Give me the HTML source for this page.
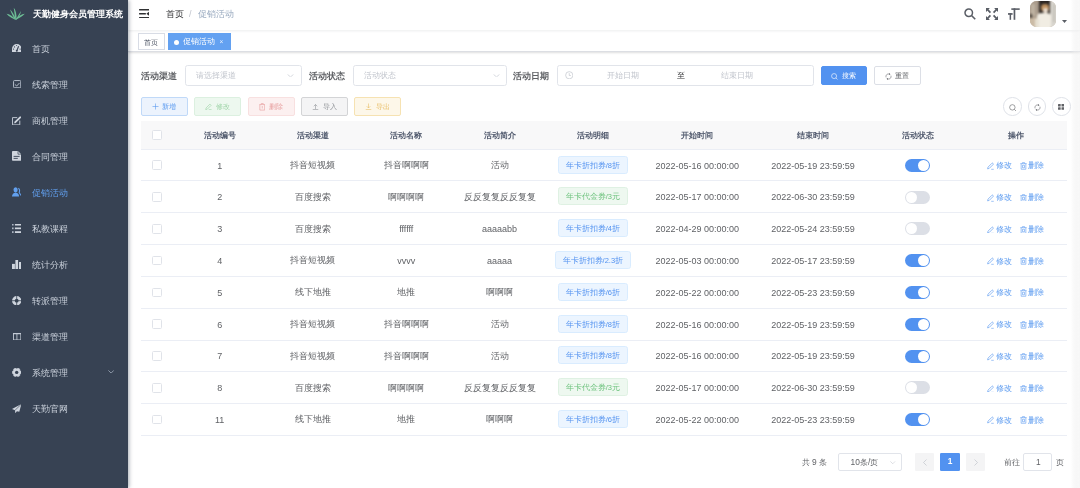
<!DOCTYPE html>
<html><head><meta charset="utf-8">
<style>
*{box-sizing:border-box;margin:0;padding:0}
html,body{width:1080px;height:488px;overflow:hidden;background:#fff;font-family:"Liberation Sans",sans-serif;position:relative}
.abs{position:absolute}
#side{position:absolute;left:0;top:0;width:128px;height:488px;background:#374253;box-shadow:1.3px 0 4px rgba(0,21,41,.35);z-index:5}
.title{position:absolute;left:33px;top:7px;font-size:9px;line-height:14px;font-weight:700;color:#fff;white-space:nowrap}
.mi{position:absolute;left:0;width:128px;height:36px;font-size:9px;line-height:36px;white-space:nowrap}
.mic{position:absolute;left:12px;top:0;width:10px;height:36px;display:flex;align-items:center;justify-content:center}
.mt{position:absolute;left:32px;top:0}
#nav{position:absolute;left:128px;top:0;width:952px;height:30px;background:#fff;box-shadow:0 0.6px 2.6px rgba(0,21,41,.08);z-index:3}
.bc{position:absolute;top:8px;font-size:9px;line-height:12px;white-space:nowrap}
#tags{position:absolute;left:128px;top:30px;width:952px;height:22px;background:#fff;border-bottom:0.65px solid #dcdee3;box-shadow:0 0.6px 2px rgba(0,0,0,.12),0 0 2px rgba(0,0,0,.04);z-index:2}
.tg{position:absolute;top:3.1px;height:16.6px;font-size:7.9px;line-height:16.6px;white-space:nowrap;border:0.65px solid #d8dce5;color:#495060;background:#fff}
.lbl{position:absolute;top:68.7px;font-size:9px;line-height:14px;font-weight:700;color:#606266;white-space:nowrap}
.inp{position:absolute;top:65.3px;height:20.3px;border:1px solid #e1e4ea;border-radius:2.6px;background:#fff}
.ph{position:absolute;font-size:8.4px;line-height:12px;color:#c0c4cc;white-space:nowrap}
.btn{position:absolute;height:18.5px;border-radius:2px;font-size:7.4px;line-height:17.2px;white-space:nowrap;border:0.65px solid}
.thead{position:absolute;background:#f8f8f9;border-bottom:1px solid #ebeef5}
.rline{position:absolute;height:1px;background:#ebeef5}
.cell{position:absolute;display:flex;align-items:center;justify-content:center;font-size:9px;color:#606266;white-space:nowrap;padding-top:1.2px}
.chk{position:absolute;width:9.6px;height:9.6px;border:1px solid #e0e3e9;border-radius:1.5px;background:#fff}
.tag{display:inline-block;position:relative;top:-0.9px;height:18px;line-height:17px;padding:0 6.8px;border-radius:2.6px;border:0.65px solid;font-size:7.5px}
.tagb{background:#ecf5ff;border-color:#d9ecff;color:#5292f0}
.tagg{background:#eef8f0;border-color:#dff1e3;color:#6cc27c}
.sw{display:inline-block;position:relative;width:25.7px;height:12.9px;border-radius:6.5px;background:#dcdfe6;top:-0.3px}
.sw i{position:absolute;left:1px;top:1px;width:10.9px;height:10.9px;border-radius:50%;background:#fff}
.sw.on{background:#5292f0}
.sw.on i{left:13.8px}
.op{color:#5c9bf0;font-size:7.5px;display:inline-flex;align-items:center;padding-top:1.2px}
.op svg{margin-right:1.2px;position:relative;top:-0.3px}
.circ{position:absolute;top:97.4px;width:18.4px;height:18.4px;border-radius:50%;border:0.65px solid #dfe2e8;background:#fff}
.pg{position:absolute;top:453.2px;height:17.6px;font-size:8.4px;line-height:19.2px;white-space:nowrap;color:#606266}
</style></head><body><div id="root" style="position:absolute;left:0;top:0;width:1080px;height:488px;will-change:transform">
<div id="side">
  <svg style="position:absolute;left:5.5px;top:7px" width="19" height="13" viewBox="0 0 38 26">
    <path d="M19 25C17.5 18 16.5 8 15.5 1.5c3.5 4 6 12 5.5 23.5z" fill="#6dbd95"/>
    <path d="M18 25C14 19 10.5 12 8 5c4 3.5 8 10 11.5 19z" fill="#6dbd95"/>
    <path d="M20 25c3.5-6 6.5-12 10-17-1 7-4.5 13-8.5 17z" fill="#6dbd95"/>
    <path d="M18.5 25.5C12 22.5 6 19 1 13.5c6 0.5 12 5 18.5 11z" fill="#6dbd95"/>
    <path d="M19.5 25.5c6.5-3 12.5-6.5 18-12-6.5 0.5-12.5 5-18.5 11z" fill="#6dbd95"/>
  </svg>
  <div class="title">天勤健身会员管理系统</div>
  <div class="mi" style="top:31.25px;color:#c9d0da"><span class="mt">首页</span></div>
<div class="mi" style="top:67.25px;color:#c9d0da"><span class="mt">线索管理</span></div>
<div class="mi" style="top:103.25px;color:#c9d0da"><span class="mt">商机管理</span></div>
<div class="mi" style="top:139.25px;color:#c9d0da"><span class="mt">合同管理</span></div>
<div class="mi" style="top:175.25px;color:#62a0ef"><span class="mt">促销活动</span></div>
<div class="mi" style="top:211.25px;color:#c9d0da"><span class="mt">私教课程</span></div>
<div class="mi" style="top:247.25px;color:#c9d0da"><span class="mt">统计分析</span></div>
<div class="mi" style="top:283.25px;color:#c9d0da"><span class="mt">转派管理</span></div>
<div class="mi" style="top:319.25px;color:#c9d0da"><span class="mt">渠道管理</span></div>
<div class="mi" style="top:355.25px;color:#c9d0da"><span class="mt">系统管理</span></div>
<div class="mi" style="top:391.25px;color:#c9d0da"><span class="mt">天勤官网</span></div>
<svg style="position:absolute;left:11.9px;top:44.1px" width="9.6" height="8.1" viewBox="0 0 9.6 8.1"><path d="M0 8.1V4.8A4.8 4.8 0 0 1 9.6 4.8V8.1z" fill="#cfd5de"/><path d="M6.6 2.3L4.9 6.6" stroke="#374253" stroke-width="1.1"/><circle cx="4.8" cy="6.7" r="1" fill="#374253"/><circle cx="2.5" cy="2.9" r=".6" fill="#374253"/><circle cx="1.5" cy="5.1" r=".6" fill="#374253"/><circle cx="8.1" cy="5.1" r=".6" fill="#374253"/><circle cx="4.6" cy="1.6" r=".5" fill="#374253"/></svg>
<svg style="position:absolute;left:12.8px;top:79.9px" width="8.3" height="8.3" viewBox="0 0 8.3 8.3"><rect x=".55" y=".55" width="7.2" height="7.2" rx=".9" fill="none" stroke="#b3bcc9" stroke-width="1"/><path d="M1.9 4.5L3.7 6L6.5 3" fill="none" stroke="#b3bcc9" stroke-width="1"/></svg>
<svg style="position:absolute;left:11.9px;top:115.7px" width="9.4" height="9.4" viewBox="0 0 9.4 9.4"><path d="M5.2 1.6H.5V8.9H7.8V4.6" fill="none" stroke="#c3cad5" stroke-width=".95"/><path d="M3.3 6.2L8.2 1.3" stroke="#cfd5de" stroke-width="1.9" stroke-linecap="round"/><path d="M3.2 6.3L2.3 7.3" stroke="#cfd5de" stroke-width="1"/></svg>
<svg style="position:absolute;left:12.0px;top:151.2px" width="9.2" height="9.7" viewBox="0 0 9.2 9.7"><path d="M.8 0H6L9.2 3.2V8.9Q9.2 9.7 8.4 9.7H.8Q0 9.7 0 8.9V.8Q0 0 .8 0z" fill="#cfd5de"/><path d="M6 .2V3.2H9" fill="none" stroke="#374253" stroke-width=".7"/><path d="M1.6 5.4H7.6M1.6 7.4H5.8" stroke="#374253" stroke-width=".9"/></svg>
<svg style="position:absolute;left:11.9px;top:187.3px" width="9.4" height="9.6" viewBox="0 0 9.4 9.6"><ellipse cx="3.6" cy="2.8" rx="2.1" ry="2.6" fill="#62a0ef"/><path d="M0 9.6Q0.2 6.2 3.6 5.5Q7 6.2 7.1 9.6z" fill="#62a0ef"/><path d="M6.4 1.2Q8.3 2.6 7.2 5.4L9 8.6" fill="none" stroke="#62a0ef" stroke-width="1.1"/></svg>
<svg style="position:absolute;left:11.9px;top:223.9px" width="9.2" height="9.0" viewBox="0 0 9.2 9.0"><rect x="0" y="0" width="1.6" height="1.5" fill="#aeb7c4"/><rect x="2.9" y="0" width="6.3" height="1.5" fill="#cfd5de"/><rect x="0" y="3.5" width="1.6" height="1.7" fill="#aeb7c4"/><rect x="2.9" y="3.5" width="6.3" height="1.7" fill="#cfd5de"/><rect x="0" y="7.2" width="1.6" height="1.8" fill="#aeb7c4"/><rect x="2.9" y="7.2" width="6.3" height="1.8" fill="#cfd5de"/></svg>
<svg style="position:absolute;left:11.9px;top:259.7px" width="9.2" height="9.2" viewBox="0 0 9.2 9.2"><rect x="0" y="3.9" width="2.9" height="5.3" fill="#cfd5de"/><rect x="3.4" y="0" width="2.7" height="9.2" fill="#cfd5de"/><rect x="7" y="2" width="2.2" height="7.2" fill="#cfd5de"/></svg>
<svg style="position:absolute;left:11.9px;top:295.5px" width="9.4" height="9.4" viewBox="0 0 9.4 9.4"><circle cx="4.7" cy="4.7" r="3.3" fill="none" stroke="#cfd5de" stroke-width="2.8"/><path d="M4.7 0V9.4M0 4.7H9.4" stroke="#374253" stroke-width=".8"/></svg>
<svg style="position:absolute;left:12.8px;top:332.8px" width="8.3" height="7.4" viewBox="0 0 8.3 7.4"><rect x=".45" y=".6" width="7.4" height="6.35" fill="none" stroke="#c3cad5" stroke-width=".9"/><rect x="0" y="0" width="8.3" height="1.2" fill="#c3cad5"/><path d="M3.9 1V7" stroke="#c3cad5" stroke-width=".85"/></svg>
<svg style="position:absolute;left:11.9px;top:367.9px" width="9.4" height="8.8" viewBox="0 0 9.4 8.8"><path d="M9.20 3.44 L9.20 5.36 L7.90 6.25 L7.78 7.82 L6.12 8.77 L4.70 8.10 L3.28 8.77 L1.62 7.82 L1.50 6.25 L0.20 5.36 L0.20 3.44 L1.50 2.55 L1.62 0.98 L3.28 0.03 L4.70 0.70 L6.12 0.03 L7.78 0.98 L7.90 2.55z" fill="#cfd5de" stroke="#cfd5de" stroke-width=".4" stroke-linejoin="round"/><circle cx="4.7" cy="4.4" r="1.7" fill="#374253"/></svg>
<svg style="position:absolute;left:11.9px;top:403.7px" width="9.4" height="9.2" viewBox="0 0 9.4 9.2"><path d="M9.4 0L0 5L3 6.3L3.3 9.2L4.9 7.3L7.3 7.7z" fill="#cfd5de"/><path d="M9.2 .3L3.1 6.2" stroke="#374253" stroke-width=".6"/></svg>
<svg style="position:absolute;left:108px;top:369.8px" width="6.2" height="3.6" viewBox="0 0 6.2 3.6"><path d="M.4 .4L3.1 3.1L5.8 .4" fill="none" stroke="#8c97a7" stroke-width="1"/></svg>
</div>
<div id="nav">
  <svg style="position:absolute;left:11px;top:8.8px" width="10.2" height="9.5" viewBox="0 0 20 19">
    <rect x="0" y="0" width="20" height="3" fill="#303133"/><rect x="0" y="8" width="13.5" height="3" fill="#303133"/><rect x="0" y="16" width="20" height="3" fill="#303133"/><path d="M20 5.5v8l-5.5-4z" fill="#303133"/>
  </svg>
  <div class="bc" style="left:37.8px;color:#303133;font-weight:400">首页</div>
  <div class="bc" style="left:61px;color:#c0c4cc">/</div>
  <div class="bc" style="left:70.2px;color:#97a8be">促销活动</div>
  <!-- search -->
  <svg style="position:absolute;left:836px;top:8px" width="12" height="12" viewBox="0 0 24 24"><circle cx="9.5" cy="9.5" r="7.5" fill="none" stroke="#5a5e66" stroke-width="3"/><path d="M15 15l7.5 7.5" stroke="#5a5e66" stroke-width="3.2"/></svg>
  <!-- fullscreen -->
  <svg style="position:absolute;left:858px;top:8px" width="12" height="12" viewBox="0 0 12 12" fill="#5a5e66">
    <path d="M0 0h3.9L0 3.9z"/><path d="M12 0v3.9L8.1 0z"/><path d="M0 12V8.1L3.9 12z"/><path d="M12 12H8.1L12 8.1z"/>
    <path d="M1.5 1.5L4.4 4.6M10.5 1.5L7.6 4.6M1.5 10.5L4.4 7.4M10.5 10.5L7.6 7.4" stroke="#5a5e66" stroke-width="1.8"/>
  </svg>
  <!-- size -->
  <svg style="position:absolute;left:880px;top:8px" width="12" height="12" viewBox="0 0 12 12" fill="#5a5e66">
    <rect x="3.3" y="0.3" width="8.4" height="1.6"/><rect x="5.6" y="0.3" width="1.7" height="11.5"/><rect x="0" y="5.1" width="4.6" height="1.7"/><rect x="1.6" y="5.1" width="1.5" height="6.7"/>
  </svg>
  <div style="position:absolute;left:901.8px;top:0.9px;width:26.3px;height:26.2px;border-radius:6.6px;overflow:hidden;background:#c2b5a3">
    <div style="position:absolute;left:0;top:0;width:27px;height:27px;filter:blur(0.9px)">
      <div style="position:absolute;left:-2px;top:-2px;width:11px;height:19px;background:#a99b8b"></div>
      <div style="position:absolute;left:1px;top:3px;width:4px;height:12px;background:#bfb3a2"></div>
      <div style="position:absolute;left:0px;top:13px;width:2px;height:4px;background:#3a342e"></div>
      <div style="position:absolute;left:9px;top:-2px;width:13px;height:15px;background:#2c2622"></div>
      <div style="position:absolute;left:20px;top:-2px;width:8px;height:30px;background:#d8d5ce"></div>
      <div style="position:absolute;left:23px;top:3px;width:2.5px;height:18px;background:#c4c0b8"></div>
      <div style="position:absolute;left:-2px;top:17px;width:12px;height:11px;background:#cbbba5"></div>
      <div style="position:absolute;left:11.5px;top:3.5px;width:7.5px;height:6.5px;border-radius:50% 50% 30% 30%;background:#bf915f"></div>
      <div style="position:absolute;left:13.5px;top:7px;width:4.5px;height:5.5px;border-radius:40%;background:#e9dccd"></div>
      <div style="position:absolute;left:7px;top:12px;width:14px;height:16px;border-radius:4px 4px 0 0;background:#f1ede3"></div>
      <div style="position:absolute;left:5px;top:18px;width:4px;height:10px;background:#e6e0d2"></div>
    </div>
  </div>
  <svg style="position:absolute;left:934px;top:20px" width="5" height="3" viewBox="0 0 10 6"><path d="M0 0h10L5 6z" fill="#5a5e66"/></svg>
</div>
<div id="tags">
  <div class="tg" style="left:9.8px;width:27px;text-align:center;font-size:7.4px;line-height:17.4px">首页</div>
  <div class="tg" style="left:40px;width:62.8px;background:#63a1f1;border-color:#63a1f1;color:#fff">
    <span style="position:absolute;left:5.3px;top:5.6px;width:5.2px;height:5.2px;border-radius:50%;background:#fff"></span><span style="position:absolute;left:14.2px;top:0">促销活动</span><span style="position:absolute;left:50.5px;top:0.3px;font-size:6.5px;color:rgba(255,255,255,.85)">×</span>
  </div>
</div>

<!-- query form -->
<div class="lbl" style="left:140.8px">活动渠道</div>
<div class="inp" style="left:184.7px;width:117px"><div class="ph" style="left:10px;top:2.9px">请选择渠道</div>
  <svg style="position:absolute;left:101.4px;top:7.6px" width="7" height="3.4" viewBox="0 0 14 7"><path d="M1 1l6 5 6-5" fill="none" stroke="#c0c4cc" stroke-width="1.3"/></svg></div>
<div class="lbl" style="left:309px">活动状态</div>
<div class="inp" style="left:352.5px;width:154px"><div class="ph" style="left:10px;top:2.9px">活动状态</div>
  <svg style="position:absolute;left:139px;top:7.6px" width="7" height="3.4" viewBox="0 0 14 7"><path d="M1 1l6 5 6-5" fill="none" stroke="#c0c4cc" stroke-width="1.3"/></svg></div>
<div class="lbl" style="left:513px">活动日期</div>
<div class="inp" style="left:557px;width:256.7px">
  <svg style="position:absolute;left:6.6px;top:4.6px" width="8.5" height="8.5" viewBox="0 0 16 16"><circle cx="8" cy="8" r="6.8" fill="none" stroke="#c0c4cc" stroke-width="1.3"/><path d="M8 4v4.5h3" fill="none" stroke="#c0c4cc" stroke-width="1.3"/></svg>
  <div class="ph" style="left:49.4px;top:2.8px">开始日期</div>
  <div class="ph" style="left:118.8px;top:2.6px;color:#303133">至</div>
  <div class="ph" style="left:162.8px;top:2.8px">结束日期</div>
</div>
<div class="btn" style="left:820.6px;top:66.4px;width:46.6px;height:18.3px;background:#5292f0;border-color:#5292f0;color:#fff">
  <svg style="position:absolute;left:9.8px;top:5.2px" width="7.2" height="7.2" viewBox="0 0 14 14"><circle cx="6" cy="6" r="4.9" fill="none" stroke="#fff" stroke-width="1.2"/><path d="M9.6 9.6l3 3" stroke="#fff" stroke-width="1.2"/></svg>
  <span style="position:absolute;left:20.9px;top:0">搜索</span></div>
<div class="btn" style="left:873.9px;top:66.4px;width:46.7px;height:18.3px;background:#fff;border-color:#dcdfe6;color:#606266">
  <svg style="position:absolute;left:10.3px;top:5.3px" width="7" height="7" viewBox="0 0 14 14"><path d="M11.89 5.22A5.2 5.2 0 0 1 5.22 11.89M2.11 8.78A5.2 5.2 0 0 1 8.78 2.11" fill="none" stroke="#606266" stroke-width="1.1"/><path d="M8.2 0.2L11 2.3 7.9 4z M5.8 13.8L3 11.7 6.1 10z" fill="#606266"/></svg>
  <span style="position:absolute;left:20.6px;top:0">重置</span></div>

<!-- action buttons -->
<div class="btn" style="left:141.1px;top:97.2px;width:46.7px;background:#ecf3fd;border-color:#c0d9f8;color:#5c9bf0">
  <svg style="position:absolute;left:9.5px;top:5.3px" width="7" height="7" viewBox="0 0 14 14"><path d="M7 1v12M1 7h12" stroke="#5c9bf0" stroke-width="1.2"/></svg>
  <span style="position:absolute;left:20.3px;top:0">新增</span></div>
<div class="btn" style="left:194.2px;top:97.2px;width:46.8px;background:#edf8ef;border-color:#dcf0e0;color:#a2d6ab">
  <svg style="position:absolute;left:9.8px;top:5.3px" width="7.5" height="7" viewBox="0 0 16 15"><path d="M8 14.2h6M1.5 14.2l0.8-3.6 8.2-8.2 2.6 2.6-8.2 8.2z" fill="none" stroke="#a2d6ab" stroke-width="1.4"/></svg>
  <span style="position:absolute;left:20.6px;top:0">修改</span></div>
<div class="btn" style="left:247.6px;top:97.2px;width:47.2px;background:#fcf0f0;border-color:#f8e0e0;color:#e8a0a0">
  <svg style="position:absolute;left:10.2px;top:5.2px" width="6.5" height="7.5" viewBox="0 0 13 15"><path d="M0.7 3.2h11.6M4.5 3.2V1h4v2.2M1.7 3.2v11h9.6v-11M6.5 6v5" fill="none" stroke="#e8a0a0" stroke-width="1.3"/></svg>
  <span style="position:absolute;left:20.6px;top:0">删除</span></div>
<div class="btn" style="left:301px;top:97.2px;width:47px;background:#f4f4f5;border-color:#d3d4d6;color:#909399">
  <svg style="position:absolute;left:10.2px;top:5.3px" width="7" height="7" viewBox="0 0 14 14"><path d="M7 12V3M3.5 6.5L7 3l3.5 3.5M1.5 13h11" fill="none" stroke="#909399" stroke-width="1.2"/></svg>
  <span style="position:absolute;left:20.6px;top:0">导入</span></div>
<div class="btn" style="left:354.3px;top:97.2px;width:47.2px;background:#fdf7e9;border-color:#f6e2b2;color:#e9bf69">
  <svg style="position:absolute;left:10.2px;top:5.3px" width="7" height="7" viewBox="0 0 14 14"><path d="M7 1v9M3.5 6.5L7 10l3.5-3.5M1.5 13h11" fill="none" stroke="#e9bf69" stroke-width="1.2"/></svg>
  <span style="position:absolute;left:20.6px;top:0">导出</span></div>

<div class="circ" style="left:1003.3px"><svg style="position:absolute;left:5.2px;top:5.4px" width="7.6" height="7.6" viewBox="0 0 14 14"><circle cx="6.2" cy="6.2" r="5" fill="none" stroke="#606266" stroke-width="1.1"/><path d="M9.8 9.8l3.2 3.2" stroke="#606266" stroke-width="1.1"/></svg></div>
<div class="circ" style="left:1027.9px"><svg style="position:absolute;left:5.4px;top:5.6px" width="7" height="7" viewBox="0 0 14 14"><path d="M11.89 5.22A5.2 5.2 0 0 1 5.22 11.89M2.11 8.78A5.2 5.2 0 0 1 8.78 2.11" fill="none" stroke="#606266" stroke-width="1.1"/><path d="M8.2 0.2L11 2.3 7.9 4z M5.8 13.8L3 11.7 6.1 10z" fill="#606266"/></svg></div>
<div class="circ" style="left:1052.3px"><svg style="position:absolute;left:5px;top:5.7px" width="6.2" height="5.8" viewBox="0 0 12 11.2" fill="#606266"><rect x="0" y="0" width="5.2" height="4.9" rx="1"/><rect x="6.8" y="0" width="5.2" height="4.9" rx="1"/><rect x="0" y="6.3" width="5.2" height="4.9" rx="1"/><rect x="6.8" y="6.3" width="5.2" height="4.9" rx="1"/></svg></div>

<div class="thead" style="left:141px;top:121px;width:926.05px;height:29px"></div>
<div class="chk" style="left:152px;top:130.3px"></div>
<div class="cell" style="left:173.00px;top:121.00px;width:93.30px;height:28.10px;color:#515a6e;font-weight:600;font-size:8.4px;padding-top:0">活动编号</div>
<div class="cell" style="left:266.30px;top:121.00px;width:93.30px;height:28.10px;color:#515a6e;font-weight:600;font-size:8.4px;padding-top:0">活动渠道</div>
<div class="cell" style="left:359.60px;top:121.00px;width:93.30px;height:28.10px;color:#515a6e;font-weight:600;font-size:8.4px;padding-top:0">活动名称</div>
<div class="cell" style="left:452.90px;top:121.00px;width:93.30px;height:28.10px;color:#515a6e;font-weight:600;font-size:8.4px;padding-top:0">活动简介</div>
<div class="cell" style="left:546.20px;top:121.00px;width:93.30px;height:28.10px;color:#515a6e;font-weight:600;font-size:8.4px;padding-top:0">活动明细</div>
<div class="cell" style="left:639.50px;top:121.00px;width:115.70px;height:28.10px;color:#515a6e;font-weight:600;font-size:8.4px;padding-top:0">开始时间</div>
<div class="cell" style="left:755.20px;top:121.00px;width:115.70px;height:28.10px;color:#515a6e;font-weight:600;font-size:8.4px;padding-top:0">结束时间</div>
<div class="cell" style="left:870.90px;top:121.00px;width:93.30px;height:28.10px;color:#515a6e;font-weight:600;font-size:8.4px;padding-top:0">活动状态</div>
<div class="cell" style="left:964.20px;top:121.00px;width:102.85px;height:28.10px;color:#515a6e;font-weight:600;font-size:8.4px;padding-top:0">操作</div>
<div class="rline" style="left:141px;top:180px;width:926.05px"></div>
<div class="chk" style="left:152px;top:160.40px"></div>
<div class="cell" style="left:173.00px;top:149.10px;width:93.30px;height:31.80px;">1</div>
<div class="cell" style="left:266.30px;top:149.10px;width:93.30px;height:31.80px;">抖音短视频</div>
<div class="cell" style="left:359.60px;top:149.10px;width:93.30px;height:31.80px;">抖音啊啊啊</div>
<div class="cell" style="left:452.90px;top:149.10px;width:93.30px;height:31.80px;">活动</div>
<div class="cell" style="left:546.20px;top:149.10px;width:93.30px;height:31.80px;"><span class="tag tagb">年卡折扣券/8折</span></div>
<div class="cell" style="left:639.50px;top:149.10px;width:115.70px;height:31.80px;">2022-05-16 00:00:00</div>
<div class="cell" style="left:755.20px;top:149.10px;width:115.70px;height:31.80px;">2022-05-19 23:59:59</div>
<div class="cell" style="left:870.90px;top:149.10px;width:93.30px;height:31.80px;"><span class="sw on"><i></i></span></div>
<div class="cell" style="left:964.20px;top:149.10px;width:102.85px;height:31.80px;justify-content:center"><span class="op"><svg width="7.5" height="7.8" viewBox="0 0 15 15.6"><path d="M1.2 13.8l0.9-3.6 7.6-7.6a1.5 1.5 0 0 1 2.1 0l0.4 0.4a1.5 1.5 0 0 1 0 2.1L4.6 12.7z" fill="none" stroke="#5c9bf0" stroke-width="1.3"/><path d="M8.5 14.6h5" stroke="#5c9bf0" stroke-width="1.2"/></svg>修改</span><span class="op" style="margin-left:8.3px"><svg width="7" height="7.6" viewBox="0 0 14 15.2"><path d="M0.6 3.3h12.8M4.8 3.3V1.2h4.4v2.1M2.3 3.3v11.2h9.4V3.3M5 6.5h4v5H5z" fill="none" stroke="#5c9bf0" stroke-width="1.2"/></svg>删除</span></div>
<div class="rline" style="left:141px;top:212px;width:926.05px"></div>
<div class="chk" style="left:152px;top:192.20px"></div>
<div class="cell" style="left:173.00px;top:180.90px;width:93.30px;height:31.80px;">2</div>
<div class="cell" style="left:266.30px;top:180.90px;width:93.30px;height:31.80px;">百度搜索</div>
<div class="cell" style="left:359.60px;top:180.90px;width:93.30px;height:31.80px;">啊啊啊啊</div>
<div class="cell" style="left:452.90px;top:180.90px;width:93.30px;height:31.80px;">反反复复反反复复</div>
<div class="cell" style="left:546.20px;top:180.90px;width:93.30px;height:31.80px;"><span class="tag tagg">年卡代金券/3元</span></div>
<div class="cell" style="left:639.50px;top:180.90px;width:115.70px;height:31.80px;">2022-05-17 00:00:00</div>
<div class="cell" style="left:755.20px;top:180.90px;width:115.70px;height:31.80px;">2022-06-30 23:59:59</div>
<div class="cell" style="left:870.90px;top:180.90px;width:93.30px;height:31.80px;"><span class="sw"><i></i></span></div>
<div class="cell" style="left:964.20px;top:180.90px;width:102.85px;height:31.80px;justify-content:center"><span class="op"><svg width="7.5" height="7.8" viewBox="0 0 15 15.6"><path d="M1.2 13.8l0.9-3.6 7.6-7.6a1.5 1.5 0 0 1 2.1 0l0.4 0.4a1.5 1.5 0 0 1 0 2.1L4.6 12.7z" fill="none" stroke="#5c9bf0" stroke-width="1.3"/><path d="M8.5 14.6h5" stroke="#5c9bf0" stroke-width="1.2"/></svg>修改</span><span class="op" style="margin-left:8.3px"><svg width="7" height="7.6" viewBox="0 0 14 15.2"><path d="M0.6 3.3h12.8M4.8 3.3V1.2h4.4v2.1M2.3 3.3v11.2h9.4V3.3M5 6.5h4v5H5z" fill="none" stroke="#5c9bf0" stroke-width="1.2"/></svg>删除</span></div>
<div class="rline" style="left:141px;top:244px;width:926.05px"></div>
<div class="chk" style="left:152px;top:224.00px"></div>
<div class="cell" style="left:173.00px;top:212.70px;width:93.30px;height:31.80px;">3</div>
<div class="cell" style="left:266.30px;top:212.70px;width:93.30px;height:31.80px;">百度搜索</div>
<div class="cell" style="left:359.60px;top:212.70px;width:93.30px;height:31.80px;">ffffff</div>
<div class="cell" style="left:452.90px;top:212.70px;width:93.30px;height:31.80px;">aaaaabb</div>
<div class="cell" style="left:546.20px;top:212.70px;width:93.30px;height:31.80px;"><span class="tag tagb">年卡折扣券/4折</span></div>
<div class="cell" style="left:639.50px;top:212.70px;width:115.70px;height:31.80px;">2022-04-29 00:00:00</div>
<div class="cell" style="left:755.20px;top:212.70px;width:115.70px;height:31.80px;">2022-05-24 23:59:59</div>
<div class="cell" style="left:870.90px;top:212.70px;width:93.30px;height:31.80px;"><span class="sw"><i></i></span></div>
<div class="cell" style="left:964.20px;top:212.70px;width:102.85px;height:31.80px;justify-content:center"><span class="op"><svg width="7.5" height="7.8" viewBox="0 0 15 15.6"><path d="M1.2 13.8l0.9-3.6 7.6-7.6a1.5 1.5 0 0 1 2.1 0l0.4 0.4a1.5 1.5 0 0 1 0 2.1L4.6 12.7z" fill="none" stroke="#5c9bf0" stroke-width="1.3"/><path d="M8.5 14.6h5" stroke="#5c9bf0" stroke-width="1.2"/></svg>修改</span><span class="op" style="margin-left:8.3px"><svg width="7" height="7.6" viewBox="0 0 14 15.2"><path d="M0.6 3.3h12.8M4.8 3.3V1.2h4.4v2.1M2.3 3.3v11.2h9.4V3.3M5 6.5h4v5H5z" fill="none" stroke="#5c9bf0" stroke-width="1.2"/></svg>删除</span></div>
<div class="rline" style="left:141px;top:276px;width:926.05px"></div>
<div class="chk" style="left:152px;top:255.80px"></div>
<div class="cell" style="left:173.00px;top:244.50px;width:93.30px;height:31.80px;">4</div>
<div class="cell" style="left:266.30px;top:244.50px;width:93.30px;height:31.80px;">抖音短视频</div>
<div class="cell" style="left:359.60px;top:244.50px;width:93.30px;height:31.80px;">vvvv</div>
<div class="cell" style="left:452.90px;top:244.50px;width:93.30px;height:31.80px;">aaaaa</div>
<div class="cell" style="left:546.20px;top:244.50px;width:93.30px;height:31.80px;"><span class="tag tagb">年卡折扣券/2.3折</span></div>
<div class="cell" style="left:639.50px;top:244.50px;width:115.70px;height:31.80px;">2022-05-03 00:00:00</div>
<div class="cell" style="left:755.20px;top:244.50px;width:115.70px;height:31.80px;">2022-05-17 23:59:59</div>
<div class="cell" style="left:870.90px;top:244.50px;width:93.30px;height:31.80px;"><span class="sw on"><i></i></span></div>
<div class="cell" style="left:964.20px;top:244.50px;width:102.85px;height:31.80px;justify-content:center"><span class="op"><svg width="7.5" height="7.8" viewBox="0 0 15 15.6"><path d="M1.2 13.8l0.9-3.6 7.6-7.6a1.5 1.5 0 0 1 2.1 0l0.4 0.4a1.5 1.5 0 0 1 0 2.1L4.6 12.7z" fill="none" stroke="#5c9bf0" stroke-width="1.3"/><path d="M8.5 14.6h5" stroke="#5c9bf0" stroke-width="1.2"/></svg>修改</span><span class="op" style="margin-left:8.3px"><svg width="7" height="7.6" viewBox="0 0 14 15.2"><path d="M0.6 3.3h12.8M4.8 3.3V1.2h4.4v2.1M2.3 3.3v11.2h9.4V3.3M5 6.5h4v5H5z" fill="none" stroke="#5c9bf0" stroke-width="1.2"/></svg>删除</span></div>
<div class="rline" style="left:141px;top:308px;width:926.05px"></div>
<div class="chk" style="left:152px;top:287.60px"></div>
<div class="cell" style="left:173.00px;top:276.30px;width:93.30px;height:31.80px;">5</div>
<div class="cell" style="left:266.30px;top:276.30px;width:93.30px;height:31.80px;">线下地推</div>
<div class="cell" style="left:359.60px;top:276.30px;width:93.30px;height:31.80px;">地推</div>
<div class="cell" style="left:452.90px;top:276.30px;width:93.30px;height:31.80px;">啊啊啊</div>
<div class="cell" style="left:546.20px;top:276.30px;width:93.30px;height:31.80px;"><span class="tag tagb">年卡折扣券/6折</span></div>
<div class="cell" style="left:639.50px;top:276.30px;width:115.70px;height:31.80px;">2022-05-22 00:00:00</div>
<div class="cell" style="left:755.20px;top:276.30px;width:115.70px;height:31.80px;">2022-05-23 23:59:59</div>
<div class="cell" style="left:870.90px;top:276.30px;width:93.30px;height:31.80px;"><span class="sw on"><i></i></span></div>
<div class="cell" style="left:964.20px;top:276.30px;width:102.85px;height:31.80px;justify-content:center"><span class="op"><svg width="7.5" height="7.8" viewBox="0 0 15 15.6"><path d="M1.2 13.8l0.9-3.6 7.6-7.6a1.5 1.5 0 0 1 2.1 0l0.4 0.4a1.5 1.5 0 0 1 0 2.1L4.6 12.7z" fill="none" stroke="#5c9bf0" stroke-width="1.3"/><path d="M8.5 14.6h5" stroke="#5c9bf0" stroke-width="1.2"/></svg>修改</span><span class="op" style="margin-left:8.3px"><svg width="7" height="7.6" viewBox="0 0 14 15.2"><path d="M0.6 3.3h12.8M4.8 3.3V1.2h4.4v2.1M2.3 3.3v11.2h9.4V3.3M5 6.5h4v5H5z" fill="none" stroke="#5c9bf0" stroke-width="1.2"/></svg>删除</span></div>
<div class="rline" style="left:141px;top:340px;width:926.05px"></div>
<div class="chk" style="left:152px;top:319.40px"></div>
<div class="cell" style="left:173.00px;top:308.10px;width:93.30px;height:31.80px;">6</div>
<div class="cell" style="left:266.30px;top:308.10px;width:93.30px;height:31.80px;">抖音短视频</div>
<div class="cell" style="left:359.60px;top:308.10px;width:93.30px;height:31.80px;">抖音啊啊啊</div>
<div class="cell" style="left:452.90px;top:308.10px;width:93.30px;height:31.80px;">活动</div>
<div class="cell" style="left:546.20px;top:308.10px;width:93.30px;height:31.80px;"><span class="tag tagb">年卡折扣券/8折</span></div>
<div class="cell" style="left:639.50px;top:308.10px;width:115.70px;height:31.80px;">2022-05-16 00:00:00</div>
<div class="cell" style="left:755.20px;top:308.10px;width:115.70px;height:31.80px;">2022-05-19 23:59:59</div>
<div class="cell" style="left:870.90px;top:308.10px;width:93.30px;height:31.80px;"><span class="sw on"><i></i></span></div>
<div class="cell" style="left:964.20px;top:308.10px;width:102.85px;height:31.80px;justify-content:center"><span class="op"><svg width="7.5" height="7.8" viewBox="0 0 15 15.6"><path d="M1.2 13.8l0.9-3.6 7.6-7.6a1.5 1.5 0 0 1 2.1 0l0.4 0.4a1.5 1.5 0 0 1 0 2.1L4.6 12.7z" fill="none" stroke="#5c9bf0" stroke-width="1.3"/><path d="M8.5 14.6h5" stroke="#5c9bf0" stroke-width="1.2"/></svg>修改</span><span class="op" style="margin-left:8.3px"><svg width="7" height="7.6" viewBox="0 0 14 15.2"><path d="M0.6 3.3h12.8M4.8 3.3V1.2h4.4v2.1M2.3 3.3v11.2h9.4V3.3M5 6.5h4v5H5z" fill="none" stroke="#5c9bf0" stroke-width="1.2"/></svg>删除</span></div>
<div class="rline" style="left:141px;top:371px;width:926.05px"></div>
<div class="chk" style="left:152px;top:351.20px"></div>
<div class="cell" style="left:173.00px;top:339.90px;width:93.30px;height:31.80px;">7</div>
<div class="cell" style="left:266.30px;top:339.90px;width:93.30px;height:31.80px;">抖音短视频</div>
<div class="cell" style="left:359.60px;top:339.90px;width:93.30px;height:31.80px;">抖音啊啊啊</div>
<div class="cell" style="left:452.90px;top:339.90px;width:93.30px;height:31.80px;">活动</div>
<div class="cell" style="left:546.20px;top:339.90px;width:93.30px;height:31.80px;"><span class="tag tagb">年卡折扣券/8折</span></div>
<div class="cell" style="left:639.50px;top:339.90px;width:115.70px;height:31.80px;">2022-05-16 00:00:00</div>
<div class="cell" style="left:755.20px;top:339.90px;width:115.70px;height:31.80px;">2022-05-19 23:59:59</div>
<div class="cell" style="left:870.90px;top:339.90px;width:93.30px;height:31.80px;"><span class="sw on"><i></i></span></div>
<div class="cell" style="left:964.20px;top:339.90px;width:102.85px;height:31.80px;justify-content:center"><span class="op"><svg width="7.5" height="7.8" viewBox="0 0 15 15.6"><path d="M1.2 13.8l0.9-3.6 7.6-7.6a1.5 1.5 0 0 1 2.1 0l0.4 0.4a1.5 1.5 0 0 1 0 2.1L4.6 12.7z" fill="none" stroke="#5c9bf0" stroke-width="1.3"/><path d="M8.5 14.6h5" stroke="#5c9bf0" stroke-width="1.2"/></svg>修改</span><span class="op" style="margin-left:8.3px"><svg width="7" height="7.6" viewBox="0 0 14 15.2"><path d="M0.6 3.3h12.8M4.8 3.3V1.2h4.4v2.1M2.3 3.3v11.2h9.4V3.3M5 6.5h4v5H5z" fill="none" stroke="#5c9bf0" stroke-width="1.2"/></svg>删除</span></div>
<div class="rline" style="left:141px;top:403px;width:926.05px"></div>
<div class="chk" style="left:152px;top:383.00px"></div>
<div class="cell" style="left:173.00px;top:371.70px;width:93.30px;height:31.80px;">8</div>
<div class="cell" style="left:266.30px;top:371.70px;width:93.30px;height:31.80px;">百度搜索</div>
<div class="cell" style="left:359.60px;top:371.70px;width:93.30px;height:31.80px;">啊啊啊啊</div>
<div class="cell" style="left:452.90px;top:371.70px;width:93.30px;height:31.80px;">反反复复反反复复</div>
<div class="cell" style="left:546.20px;top:371.70px;width:93.30px;height:31.80px;"><span class="tag tagg">年卡代金券/3元</span></div>
<div class="cell" style="left:639.50px;top:371.70px;width:115.70px;height:31.80px;">2022-05-17 00:00:00</div>
<div class="cell" style="left:755.20px;top:371.70px;width:115.70px;height:31.80px;">2022-06-30 23:59:59</div>
<div class="cell" style="left:870.90px;top:371.70px;width:93.30px;height:31.80px;"><span class="sw"><i></i></span></div>
<div class="cell" style="left:964.20px;top:371.70px;width:102.85px;height:31.80px;justify-content:center"><span class="op"><svg width="7.5" height="7.8" viewBox="0 0 15 15.6"><path d="M1.2 13.8l0.9-3.6 7.6-7.6a1.5 1.5 0 0 1 2.1 0l0.4 0.4a1.5 1.5 0 0 1 0 2.1L4.6 12.7z" fill="none" stroke="#5c9bf0" stroke-width="1.3"/><path d="M8.5 14.6h5" stroke="#5c9bf0" stroke-width="1.2"/></svg>修改</span><span class="op" style="margin-left:8.3px"><svg width="7" height="7.6" viewBox="0 0 14 15.2"><path d="M0.6 3.3h12.8M4.8 3.3V1.2h4.4v2.1M2.3 3.3v11.2h9.4V3.3M5 6.5h4v5H5z" fill="none" stroke="#5c9bf0" stroke-width="1.2"/></svg>删除</span></div>
<div class="rline" style="left:141px;top:435px;width:926.05px"></div>
<div class="chk" style="left:152px;top:414.80px"></div>
<div class="cell" style="left:173.00px;top:403.50px;width:93.30px;height:31.80px;">11</div>
<div class="cell" style="left:266.30px;top:403.50px;width:93.30px;height:31.80px;">线下地推</div>
<div class="cell" style="left:359.60px;top:403.50px;width:93.30px;height:31.80px;">地推</div>
<div class="cell" style="left:452.90px;top:403.50px;width:93.30px;height:31.80px;">啊啊啊</div>
<div class="cell" style="left:546.20px;top:403.50px;width:93.30px;height:31.80px;"><span class="tag tagb">年卡折扣券/6折</span></div>
<div class="cell" style="left:639.50px;top:403.50px;width:115.70px;height:31.80px;">2022-05-22 00:00:00</div>
<div class="cell" style="left:755.20px;top:403.50px;width:115.70px;height:31.80px;">2022-05-23 23:59:59</div>
<div class="cell" style="left:870.90px;top:403.50px;width:93.30px;height:31.80px;"><span class="sw on"><i></i></span></div>
<div class="cell" style="left:964.20px;top:403.50px;width:102.85px;height:31.80px;justify-content:center"><span class="op"><svg width="7.5" height="7.8" viewBox="0 0 15 15.6"><path d="M1.2 13.8l0.9-3.6 7.6-7.6a1.5 1.5 0 0 1 2.1 0l0.4 0.4a1.5 1.5 0 0 1 0 2.1L4.6 12.7z" fill="none" stroke="#5c9bf0" stroke-width="1.3"/><path d="M8.5 14.6h5" stroke="#5c9bf0" stroke-width="1.2"/></svg>修改</span><span class="op" style="margin-left:8.3px"><svg width="7" height="7.6" viewBox="0 0 14 15.2"><path d="M0.6 3.3h12.8M4.8 3.3V1.2h4.4v2.1M2.3 3.3v11.2h9.4V3.3M5 6.5h4v5H5z" fill="none" stroke="#5c9bf0" stroke-width="1.2"/></svg>删除</span></div>

<!-- pagination -->
<div class="pg" style="left:801.8px">共 9 条</div>
<div class="inp" style="left:837.6px;top:453.2px;width:64.2px;height:17.6px;border-radius:2px"><div class="ph" style="left:12px;top:1.7px;color:#606266">10条/页</div>
  <svg style="position:absolute;left:51.7px;top:6.8px" width="5.5" height="3.2" viewBox="0 0 14 8"><path d="M1 1l6 6 6-6" fill="none" stroke="#c0c4cc" stroke-width="1.4"/></svg></div>
<div class="pg" style="left:915px;width:18.8px;background:#f4f4f5;border-radius:1.3px"><svg style="position:absolute;left:7.5px;top:5.5px" width="4" height="7" viewBox="0 0 8 14"><path d="M7 1L1 7l6 6" fill="none" stroke="#c0c4cc" stroke-width="1.4"/></svg></div>
<div class="pg" style="left:940.4px;width:19.2px;background:#5292f0;border-radius:1.3px;color:#fff;text-align:center;font-weight:700;line-height:17.6px">1</div>
<div class="pg" style="left:966.4px;width:18.7px;background:#f4f4f5;border-radius:1.3px"><svg style="position:absolute;left:7.5px;top:5.5px" width="4" height="7" viewBox="0 0 8 14"><path d="M1 1l6 6-6 6" fill="none" stroke="#c0c4cc" stroke-width="1.4"/></svg></div>
<div class="pg" style="left:1004.3px">前往</div>
<div class="inp" style="left:1023.3px;top:453.2px;width:29.2px;height:17.6px;border-radius:2px"><div class="ph" style="left:0;width:28px;text-align:center;top:1.6px;color:#606266">1</div></div>
<div class="pg" style="left:1055.7px">页</div>
<div style="position:absolute;left:1071px;top:0;width:9px;height:488px;background:linear-gradient(90deg,rgba(240,240,240,0.05),rgba(240,240,240,0.45) 40%,rgba(240,240,240,0.5));z-index:10"></div>
</div></body></html>
